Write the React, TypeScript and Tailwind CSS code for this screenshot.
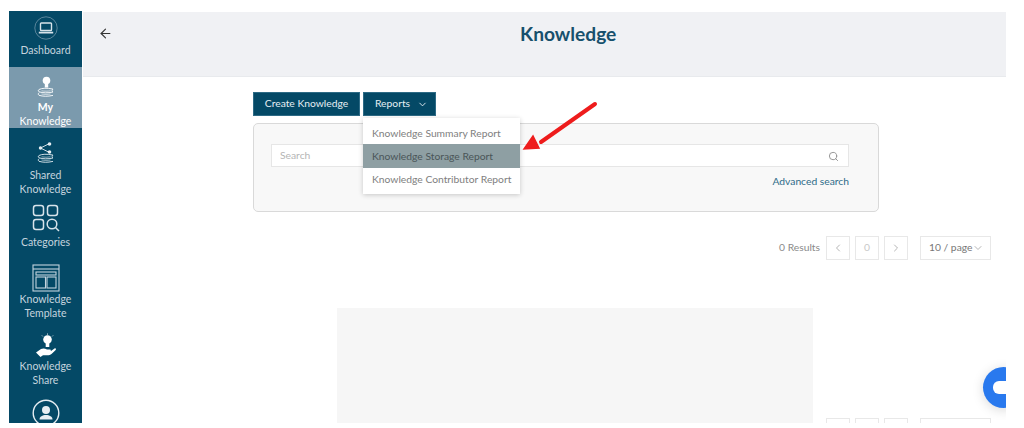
import { ArrowLeft, ChevronDown, ChevronLeft, ChevronRight, Search } from "lucide-react";

function LaptopIcon() {
    return (
        <svg width="24" height="24" viewBox="0 0 24 24" fill="none" stroke="#d7e3ea" className="mt-[5px] shrink-0">
            <circle cx="12" cy="12" r="11.2" strokeWidth="0.7" stroke="#7f9fb2" />
            <rect x="6.5" y="7" width="11" height="7.5" rx="0.8" strokeWidth="1.4" />
            <path d="M4.8 16.6h14.4" strokeWidth="1.8" />
        </svg>
    );
}

function BookStack() {
    return (
        <>
            <path d="M5 14c3-1.500 8-1.700 14-.4-1.200 1-1.200 2 0 2.900-5.500 1.200-10 1-14-.2-.9-.7-.9-1.700 0-2.300z" strokeWidth="0.900" />
            <path d="M5 17.200c-.9.700-.9 2 0 2.600 4 1.200 8.500 1.300 14 .1" strokeWidth="0.900" />
            <path d="M7.500 15.300c3 .5 6 .5 9 0M7.500 18.500c3 .5 6 .5 9 0" strokeWidth="0.600" />
        </>
    );
}

function BulbBooksIcon() {
    return (
        <svg width="24" height="25" viewBox="0 0 24 24" fill="none" stroke="#ffffff" className="shrink-0">
            <circle cx="12.500" cy="5" r="3.800" fill="#ffffff" stroke="none" />
            <rect x="10.800" y="8" width="3.400" height="4" fill="#ffffff" stroke="none" />
            <BookStack />
        </svg>
    );
}

function ShareBooksIcon() {
    return (
        <svg width="24" height="25" viewBox="0 0 24 24" fill="none" stroke="#e6eef3" className="mt-[13px] shrink-0">
            <path d="M6.500 6.500l9-4.500M6.500 6.500l9 4.500" strokeWidth="0.900" />
            <circle cx="6.500" cy="6.500" r="1.700" fill="#e6eef3" stroke="none" />
            <circle cx="15.500" cy="2.500" r="1.800" fill="#e6eef3" stroke="none" />
            <circle cx="15.500" cy="10.500" r="1.800" fill="#e6eef3" stroke="none" />
            <BookStack />
        </svg>
    );
}

function CategoriesIcon() {
    return (
        <svg width="28" height="28" viewBox="0 0 28 28" fill="none" stroke="#d7e3ea" strokeWidth="1.500" className="shrink-0">
            <rect x="1.500" y="1.500" width="10" height="10" rx="2.500" />
            <rect x="15.500" y="1.500" width="10" height="10" rx="2.500" />
            <rect x="1.500" y="15.500" width="10" height="10" rx="2.500" />
            <circle cx="20" cy="20" r="4.800" />
            <path d="M23.500 23.500l3.500 3.500" />
        </svg>
    );
}

function TemplateIcon() {
    return (
        <svg width="28" height="28" viewBox="0 0 28 28" fill="none" stroke="#c4d4de" strokeWidth="1.100" className="shrink-0">
            <rect x="1" y="1" width="26" height="26" />
            <path d="M1 5h26" />
            <rect x="4" y="8" width="20" height="3" />
            <rect x="4" y="13" width="9.500" height="11" />
            <rect x="15" y="13" width="9" height="11" />
        </svg>
    );
}

function HandBulbIcon() {
    return (
        <svg width="24" height="26" viewBox="0 0 24 26" fill="#ffffff" className="shrink-0">
            <circle cx="13.500" cy="6.500" r="4.300" />
            <rect x="11.700" y="10" width="3.600" height="4" />
            <path d="M13.500.5v1.200M8 2.500l.8.900M19 2.500l-.8.900" stroke="#ffffff" strokeWidth="0.800" />
            <path d="M2 19.500l5-3.500c2-1 4-.6 6 .4h3c1.200 0 1.200 1.800 0 1.900h-3.500l4.500-.3 3.500-2.500c1.200-.6 2 .6 1.200 1.500l-4.200 4c-1 .8-2.500 1.300-4 1.300H9l-2.500 1.700z" />
        </svg>
    );
}

function ProfileIcon() {
    return (
        <svg width="28" height="28" viewBox="0 0 28 28" className="shrink-0">
            <circle cx="14" cy="14" r="12.800" fill="none" stroke="#e6eef3" strokeWidth="1.400" />
            <circle cx="14" cy="11" r="4" fill="#e6eef3" />
            <path d="M7.500 20.500c0-3 3-4.500 6.500-4.500s6.500 1.500 6.500 4.500z" fill="#e6eef3" />
        </svg>
    );
}

function NavItem({ label, icon, className, labelClass }: { label: string[]; icon: React.ReactNode; className: string; labelClass: string }) {
    return (
        <div className={`flex shrink-0 flex-col items-center text-[10.500px] leading-[14px] text-[#c4d4de] ${className}`}>
            {icon}
            <div className={`flex flex-col items-center ${labelClass}`}>
                {label.map((line) => (
                    <span key={line}>{line}</span>
                ))}
            </div>
        </div>
    );
}

function Pager() {
    return (
        <div className="flex items-center text-[10.300px] text-[#8a8a8a]">
            <span className="mr-[6px]">0 Results</span>
            <span className="flex h-[24px] w-[24px] items-center justify-center border border-[#e8e8e8] text-[#b5b5b5]">
                <ChevronLeft size={12} />
            </span>
            <span className="ml-[5px] flex h-[24px] w-[24px] items-center justify-center border border-[#e8e8e8] text-[#c8c8c8]">
                0
            </span>
            <span className="ml-[5px] flex h-[24px] w-[24px] items-center justify-center border border-[#e8e8e8] text-[#b5b5b5]">
                <ChevronRight size={12} />
            </span>
            <span className="ml-[12px] flex h-[24px] w-[71px] items-center whitespace-nowrap border border-[#e8e8e8] pl-[8px] text-[#777777]">
                10 / page
                <ChevronDown size={12} className="text-[#b5b5b5]" />
            </span>
        </div>
    );
}

export default function App() {
    return (
        <div className="h-[428px] w-[1024px] overflow-hidden bg-white pl-[9px] pt-[11px] font-['Lato',sans-serif]">
            <div className="relative flex h-[412px] w-[997px] overflow-hidden">
                <aside className="flex w-[73px] shrink-0 flex-col overflow-hidden bg-[#044966]">
                    <NavItem className="h-[56px]" labelClass="mt-[3px]" label={["Dashboard"]} icon={<LaptopIcon />} />
                    <div className="flex h-[61px] shrink-0 flex-col items-center bg-[#7b9aad] pt-[8px] text-[10.500px] leading-[14px] text-white">
                        <BulbBooksIcon />
                        <span className="font-bold">My</span>
                        <span>Knowledge</span>
                    </div>
                    <NavItem className="h-[68px]" labelClass="mt-[2px]" label={["Shared", "Knowledge"]} icon={<ShareBooksIcon />} />
                    <NavItem className="h-[53px] justify-end" labelClass="mt-[3px]" label={["Categories"]} icon={<CategoriesIcon />} />
                    <NavItem className="mt-[15px] h-[69px]" labelClass="mt-0" label={["Knowledge", "Template"]} icon={<TemplateIcon />} />
                    <NavItem className="h-[66px]" labelClass="mt-0" label={["Knowledge", "Share"]} icon={<HandBulbIcon />} />
                    <div className="flex justify-center">
                        <ProfileIcon />
                    </div>
                </aside>

                <main className="ml-px min-w-0 flex-1 overflow-hidden">
                    <header className="mt-px flex h-[65px] border-b border-[#e8eaed] bg-[#f0f1f4]">
                        <ArrowLeft size={15} strokeWidth={1.800} className="ml-[15px] mt-[14px] text-[#333333]" />
                        <h1 className="ml-[407px] mt-[8px] text-[19.200px] font-bold leading-[28px] text-[#17506c]">
                            Knowledge
                        </h1>
                    </header>

                    <div className="ml-[170px] mt-[15px] w-[626px]">
                        <div className="flex gap-[3px]">
                            <button className="h-[24px] w-[107px] border border-[#2d6a85] bg-[#044966] text-[10.300px] text-[#e6eef3]">
                                Create Knowledge
                            </button>
                            <button className="flex h-[24px] w-[73px] items-center gap-[7px] border border-[#2d6a85] bg-[#044966] pl-[11px] text-[10.300px] text-[#e6eef3]">
                                Reports
                                <ChevronDown size={11} />
                            </button>
                        </div>
                        <div className="mt-[7px] h-[89px] rounded-[5px] border border-[#d9d9d9] bg-[#f8f8f8] px-[17px] pt-[20px]">
                            <div className="flex h-[23px] w-[578px] items-center justify-between border border-[#e6e6e6] bg-white pl-[8px] pr-[9px] pt-px text-[10.300px] text-[#b5b5b5]">
                                <span>Search</span>
                                <Search size={11} className="text-[#8f8f8f]" />
                            </div>
                            <div className="mt-[7px] w-[578px] text-right text-[10.300px] leading-[14px] text-[#2e6b88]">
                                Advanced search
                            </div>
                        </div>
                    </div>

                    <div className="mr-[15px] mt-[24px] flex justify-end">
                        <Pager />
                    </div>

                    <div className="mt-[48px] flex items-end">
                        <div className="ml-[254px] h-[120px] w-[476px] bg-[#f6f6f6]" />
                        <div className="ml-[13px] flex h-[10px] items-start overflow-hidden">
                            <div className="flex">
                                <span className="h-[24px] w-[24px] border border-[#e8e8e8]" />
                                <span className="ml-[5px] h-[24px] w-[24px] border border-[#e8e8e8]" />
                                <span className="ml-[5px] h-[24px] w-[24px] border border-[#e8e8e8]" />
                                <span className="ml-[12px] h-[24px] w-[71px] border border-[#e8e8e8]" />
                            </div>
                        </div>
                    </div>
                </main>

                {/* dropdown menu over the search card */}
                <div className="absolute left-[354px] top-[107px] w-[157px] whitespace-nowrap bg-white py-[3px] text-[10.300px] text-[#808080] shadow-[0_1px_5px_rgba(0,0,0,0.2)]">
                    <div className="flex h-[23px] items-center pl-[9px] pt-[2px]">Knowledge Summary Report</div>
                    <div className="flex h-[24px] items-center bg-[#8e9fa3] pl-[9px] pt-px text-[#4a5558]">Knowledge Storage Report</div>
                    <div className="flex h-[23px] items-center pl-[9px] pt-px">Knowledge Contributor Report</div>
                </div>

                {/* red annotation arrow */}
                <svg className="absolute left-[510px] top-[88px]" width="84" height="58" viewBox="0 0 84 58">
                    <path d="M76 5L22 43" stroke="#ee1c1c" strokeWidth="4" strokeLinecap="round" />
                    <path d="M5 50l9-13 6 12z" fill="#ee1c1c" stroke="#ee1c1c" strokeWidth="1.500" />
                </svg>

                {/* chat bubble, cut by the frame */}
                <div className="absolute left-[974px] top-[356px] flex h-[41px] w-[41px] items-center justify-center rounded-full bg-[#2979ee] shadow-[0_2px_12px_rgba(0,0,0,0.15)]">
                    <span className="h-[13px] w-[21px] rounded-[6px] bg-white" />
                </div>
            </div>
        </div>
    );
}
